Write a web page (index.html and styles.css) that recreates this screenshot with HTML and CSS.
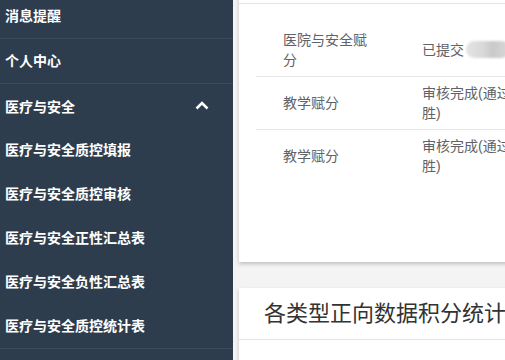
FILE: index.html
```html
<!DOCTYPE html>
<html lang="zh-CN">
<head>
  <meta charset="UTF-8">
  <title>医疗与安全</title>
  <link rel="stylesheet" href="styles.css">
</head>
<body>
  <div class="layout">
    <!-- 左侧菜单 -->
    <div class="sidebar">
      <ul class="menu">
        <li class="menu-item">消息提醒</li>
        <li class="menu-item">个人中心</li>
        <li class="submenu">
          <div class="submenu-title">
            <span>医疗与安全</span>
            <svg class="arrow" width="14" height="9" viewBox="0 0 14 9">
              <polyline points="1.5,7.5 7,2 12.5,7.5" fill="none" stroke="#fff" stroke-width="2.6"/>
            </svg>
          </div>
          <ul class="submenu-list">
            <li>医疗与安全质控填报</li>
            <li>医疗与安全质控审核</li>
            <li>医疗与安全正性汇总表</li>
            <li>医疗与安全负性汇总表</li>
            <li>医疗与安全质控统计表</li>
          </ul>
        </li>
      </ul>
    </div>

    <!-- 主体内容 -->
    <div class="main">
      <div class="content">
        <div class="card">
          <div class="card-header"></div>
          <div class="card-body">
            <table class="score-table">
              <colgroup>
                <col class="col-name">
                <col class="col-state">
                <col>
              </colgroup>
              <tr>
                <td>医院与安全赋分</td>
                <td>已提交<span class="blur"></span></td>
                <td></td>
              </tr>
              <tr>
                <td>教学赋分</td>
                <td>审核完成(通过：王胜)</td>
                <td></td>
              </tr>
              <tr>
                <td>教学赋分</td>
                <td>审核完成(通过：王胜)</td>
                <td></td>
              </tr>
            </table>
          </div>
        </div>

        <div class="card">
          <div class="card-header">各类型正向数据积分统计</div>
          <div class="card-body"></div>
        </div>
      </div>
    </div>
  </div>
</body>
</html>
```

FILE: styles.css
```css
body {
  margin: 0;
  font-family: "Liberation Sans", "Noto Sans CJK SC", sans-serif;
  overflow: hidden;
}
ul {
  list-style: none;
  margin: 0;
  padding: 0;
}
.layout {
  display: flex;
  width: 505px;
  height: 360px;
  overflow: hidden;
}

/* 侧边栏 */
.sidebar {
  width: 233px;
  flex-shrink: 0;
  background: #2e3d4d;
  color: #fff;
  font-size: 14px;
  font-weight: bold;
  overflow: hidden;
}
.menu {
  margin-top: -6px;
}
.menu-item {
  height: 44px;
  line-height: 44px;
  padding-left: 5px;
  border-bottom: 1px solid #3c4b5b;
}
.submenu {
  border-bottom: 1px solid #3c4b5b;
}
.submenu-title {
  display: flex;
  align-items: center;
  justify-content: space-between;
  height: 44px;
  padding: 0 24px 0 5px;
}
.arrow {
  display: block;
  margin-top: -2px;
}
.submenu-list li {
  height: 44px;
  line-height: 44px;
  padding-left: 5px;
}

/* 主体 */
.main {
  flex: 1;
  min-width: 0;
  background: #f4f4f4;
  padding-left: 6px;
}
.content {
  width: 560px;
  margin-top: -48px;
}
.card {
  background: #fff;
  box-shadow: 0 2px 4px rgba(0, 0, 0, 0.22);
  margin-bottom: 26px;
}
.card-header {
  height: 51px;
  line-height: 51px;
  padding-left: 25px;
  font-size: 22px;
  color: #333;
  border-bottom: 1px solid #e4e4e4;
}
.card-body {
  padding: 20px 0 80px 17px;
}
.score-table {
  border-collapse: collapse;
  table-layout: fixed;
  width: 100%;
  font-size: 14px;
  color: #606266;
  line-height: 20px;
}
.col-name {
  width: 139px;
}
.col-state {
  width: 172px;
}
.score-table td {
  padding: 6px 20px 6px 27px;
  border-bottom: 1px solid #e6e6e6;
  vertical-align: middle;
}
.score-table tr:last-child td {
  border-bottom: none;
}
.blur {
  display: inline-block;
  width: 44px;
  height: 17px;
  margin-left: 2px;
  vertical-align: -3px;
  border-radius: 9px;
  background: linear-gradient(90deg, #e4e4e4 0%, #d8d8d8 40%, #c9c9c9 60%, #dadada 100%);
  filter: blur(1.2px);
}
```
